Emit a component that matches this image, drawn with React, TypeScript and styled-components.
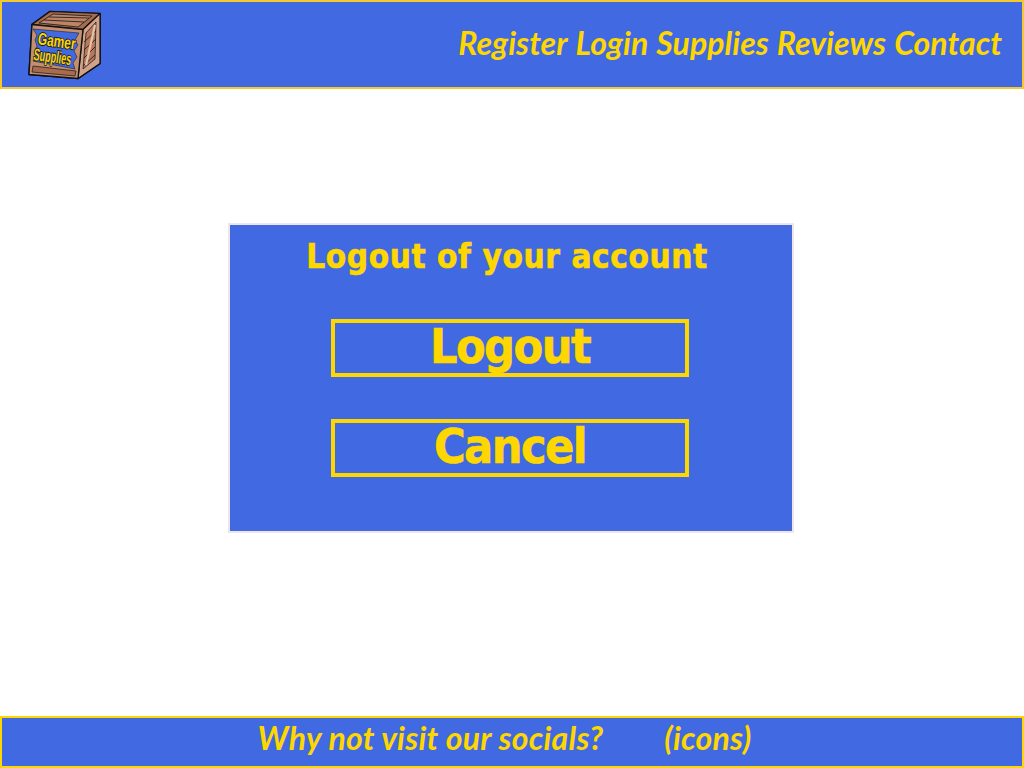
import React from "react";
import styled, { createGlobalStyle } from "styled-components";

const GOLD = "#ffd700";
const BLUE = "#4169e1";

const Global = createGlobalStyle`
  html, body { margin: 0; padding: 0; background: #fff; }
  * { box-sizing: border-box; }
`;

const Page = styled.div`
  width: 1024px;
  height: 768px;
  display: flex;
  flex-direction: column;
  overflow: hidden;
`;

const Header = styled.header`
  height: 89px;
  flex: none;
  display: flex;
  align-items: center;
  justify-content: space-between;
  background: ${BLUE};
  border: 2px solid #f5c92e;
  padding: 0 20px 0 26px;
`;

const Nav = styled.nav`
  display: flex;
  gap: 8px;
  margin-bottom: 4px;
`;

const NavLink = styled.a`
  font-family: "Lato", sans-serif;
  font-size: 32px;
  font-style: italic;
  font-weight: 700;
  letter-spacing: 0.06px;
  color: ${GOLD};
`;

const Main = styled.main`
  flex: 1;
  padding: 134px 0 0 228px;
`;

const Panel = styled.section`
  width: 566px;
  height: 310px;
  background: ${BLUE};
  border: 2px solid #eee6ea;
  display: flex;
  flex-direction: column;
  align-items: center;
  padding-top: 10px;
`;

const Title = styled.h1`
  margin: 0 8px 0 0;
  height: 84px;
  font-family: "DejaVu Sans", sans-serif;
  font-stretch: condensed;
  font-size: 33px;
  line-height: 44px;
  font-weight: 700;
  letter-spacing: 0.6px;
  color: ${GOLD};
  -webkit-text-stroke: 0.6px ${GOLD};
`;

const Button = styled.button`
  width: 358px;
  height: 58px;
  margin: 0 2px 42px 0;
  background: transparent;
  border: 4px solid ${GOLD};
  border-radius: 0;
  padding: 0 0 5px;
  font-family: "DejaVu Sans", sans-serif;
  font-stretch: condensed;
  font-size: 48px;
  line-height: 46px;
  font-weight: 700;
  letter-spacing: -1.5px;
  color: ${GOLD};
  -webkit-text-stroke: 0.6px ${GOLD};
`;

const Footer = styled.footer`
  height: 52px;
  flex: none;
  display: flex;
  align-items: center;
  justify-content: center;
  gap: 61px;
  background: ${BLUE};
  border: 2px solid ${GOLD};
  padding: 0 15px 9px 0;
`;

const FooterText = styled.span`
  font-family: "Lato", sans-serif;
  font-size: 32px;
  font-style: italic;
  font-weight: 700;
  letter-spacing: 0.25px;
  color: ${GOLD};
`;

const LogoSvg = styled.svg`
  display: block;
  width: 76px;
  height: 72px;
  flex: none;
`;

const LogoText = styled.text`
  font-family: "Liberation Sans", sans-serif;
  font-weight: 700;
  fill: ${GOLD};
  stroke: #111;
  stroke-width: 1.6px;
  paint-order: stroke;
`;

const Logo = () => (
  <LogoSvg viewBox="0 0 76 72">
    <path d="M4 15.5 L22 2.5 L72 4.5 L72 54.5 L50 69.5 L1 65.5 Z" fill="#b9795a" stroke="#111" strokeWidth="1.6" strokeLinejoin="round" />
    <path d="M4 15.5 L22 2.5 L72 4.5 L55 20.5 Z" fill="#a96b4c" stroke="#111" strokeWidth="1.2" strokeLinejoin="round" />
    <path d="M11 14 L25 5 L64 7 L50 18 Z" fill="#bd8566" stroke="#222" strokeWidth="0.9" />
    <path d="M16 11 L56 13 M21 8 L61 9" stroke="#222" strokeWidth="0.9" fill="none" />
    <path d="M55 20.5 L72 4.5 L72 54.5 L50 69.5 Z" fill="#d2a288" stroke="#111" strokeWidth="1.2" strokeLinejoin="round" />
    <path d="M58 24 L68 13 L67 50 L55 60 Z" fill="#b9795a" stroke="#222" strokeWidth="0.8" />
    <path d="M56 33 L68 22 M56 41 L68 30 M56 49 L67 38 M55 57 L67 46" stroke="#222" strokeWidth="0.9" fill="none" />
    <path d="M58 56 L67 16" stroke="#e6c2ac" strokeWidth="2.2" fill="none" />
    <path d="M4 15.5 L55 20.5 L50 69.5 L1 65.5 Z" fill="#c48e70" stroke="#111" strokeWidth="1.4" strokeLinejoin="round" />
    <path d="M5 57 L48 62 L47 67 L4 63 Z" fill="#a96b4c" stroke="#222" strokeWidth="0.8" />
    <path d="M5 20 L9 26 L7 31 L9 37 L6 43 L8 48 L5 52 L47 60 L45 54 L49 48 L46 42 L50 36 L47 31 L51 24 Z" fill={BLUE} stroke="#222" strokeWidth="0.6" />
    <g transform="rotate(8 28 38)">
      <LogoText x="28" y="38" textAnchor="middle" fontSize="17" textLength="38" lengthAdjust="spacingAndGlyphs">Gamer</LogoText>
      <LogoText x="26" y="54" textAnchor="middle" fontSize="17" textLength="38" lengthAdjust="spacingAndGlyphs">Supplies</LogoText>
    </g>
  </LogoSvg>
);

export default function App() {
  return (
    <Page>
      <Global />
      <Header>
        <Logo />
        <Nav>
          {["Register", "Login", "Supplies", "Reviews", "Contact"].map((l) => (
            <NavLink key={l}>{l}</NavLink>
          ))}
        </Nav>
      </Header>
      <Main>
        <Panel>
          <Title>Logout of your account</Title>
          <Button>Logout</Button>
          <Button>Cancel</Button>
        </Panel>
      </Main>
      <Footer>
        <FooterText>Why not visit our socials?</FooterText>
        <FooterText>(icons)</FooterText>
      </Footer>
    </Page>
  );
}
